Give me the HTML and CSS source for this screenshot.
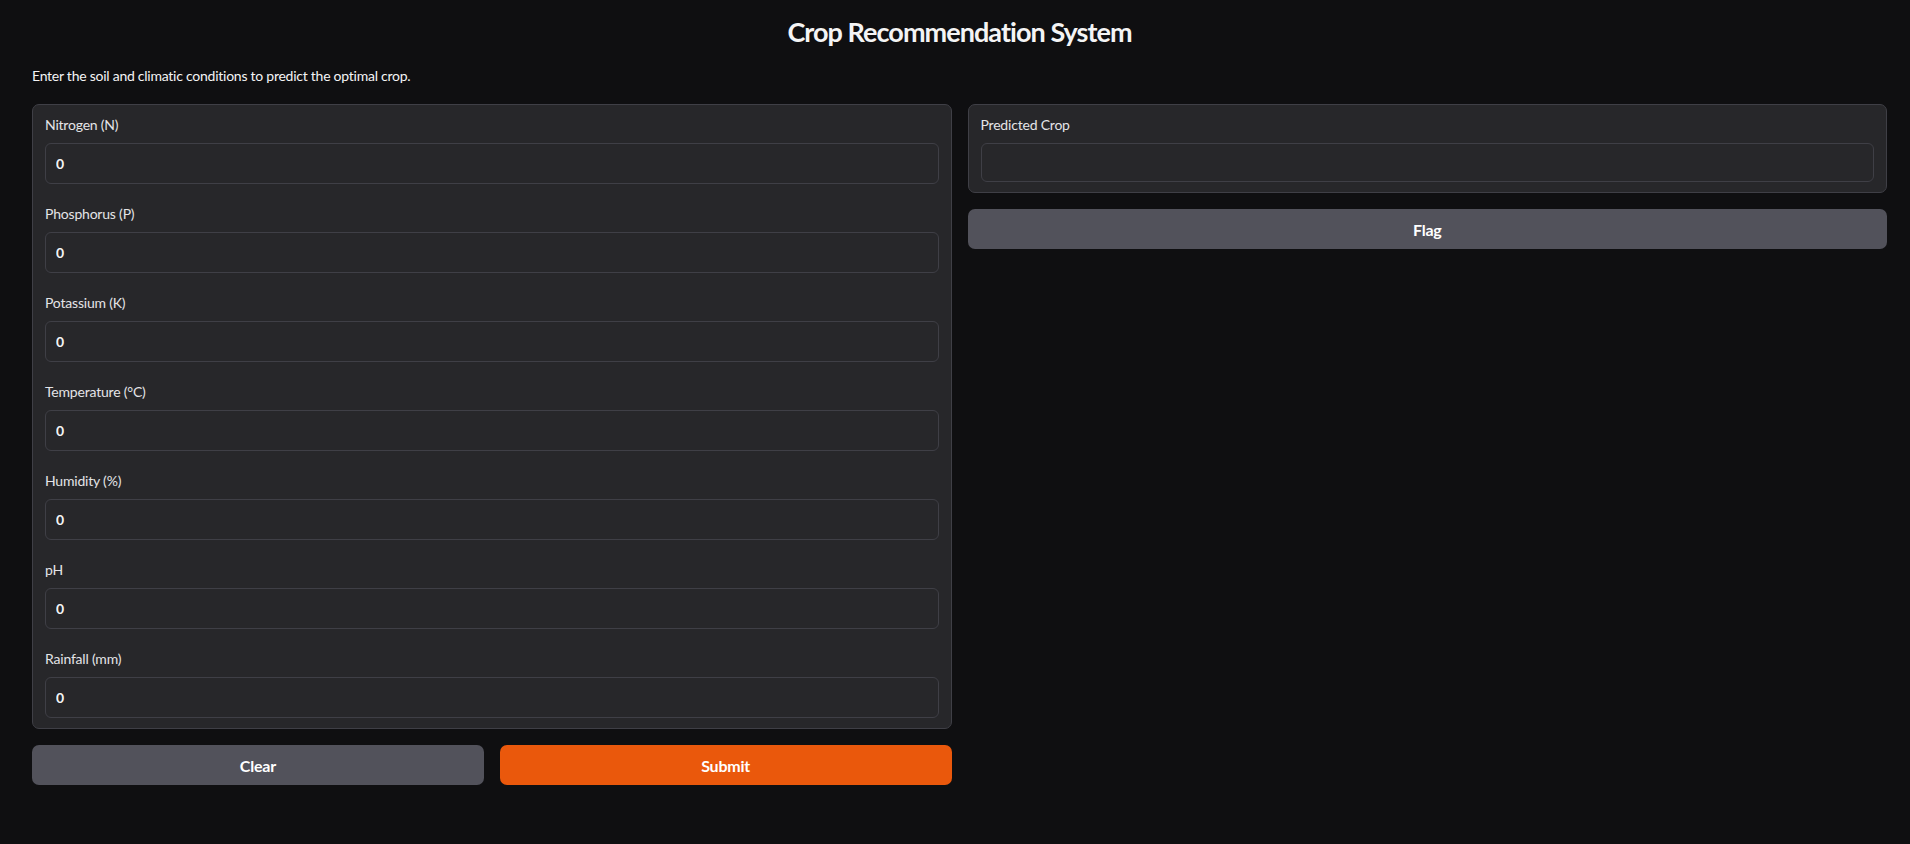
FILE: index.html
```html
<!DOCTYPE html>
<html lang="en">
<head>
<meta charset="utf-8">
<title>Crop Recommendation System</title>
<link rel="stylesheet" href="styles.css">
</head>
<body>
<div class="app">
  <h1 class="title">Crop Recommendation System</h1>
  <p class="desc">Enter the soil and climatic conditions to predict the optimal crop.</p>
  <div class="row">
    <div class="col">
      <div class="card">
        <label class="field"><span class="label">Nitrogen (N)</span><input class="num" type="text" value="0"></label>
        <label class="field"><span class="label">Phosphorus (P)</span><input class="num" type="text" value="0"></label>
        <label class="field"><span class="label">Potassium (K)</span><input class="num" type="text" value="0"></label>
        <label class="field"><span class="label">Temperature (°C)</span><input class="num" type="text" value="0"></label>
        <label class="field"><span class="label">Humidity (%)</span><input class="num" type="text" value="0"></label>
        <label class="field"><span class="label">pH</span><input class="num" type="text" value="0"></label>
        <label class="field"><span class="label">Rainfall (mm)</span><input class="num" type="text" value="0"></label>
      </div>
      <div class="btns">
        <button class="btn secondary">Clear</button>
        <button class="btn primary">Submit</button>
      </div>
    </div>
    <div class="col">
      <div class="card">
        <label class="field"><span class="label">Predicted Crop</span><textarea class="out" rows="1"></textarea></label>
      </div>
      <div class="btns">
        <button class="btn secondary">Flag</button>
      </div>
    </div>
  </div>
</div>
</body>
</html>
```

FILE: styles.css
```css
html, body {
  margin: 0;
  background: #0f0f11;
  color: #f4f4f5;
  font-family: Lato, "Noto Sans", sans-serif;
}

.app {
  padding: 15px 23px 0 32px;
}

.title {
  margin: 0;
  font-size: 27px;
  line-height: 34px;
  font-weight: 700;
  letter-spacing: -0.95px;
  text-align: center;
  color: #f4f4f5;
}

.desc {
  margin: 17px 0 18px 0;
  font-size: 14px;
  line-height: 20px;
  letter-spacing: -0.25px;
  color: #f4f4f5;
}

.row {
  display: flex;
  gap: 16px;
  align-items: flex-start;
}

.col {
  flex: 1 1 0;
  min-width: 0;
  display: flex;
  flex-direction: column;
  gap: 16px;
}

.card {
  background: #27272a;
  border: 1px solid #3f3f46;
  border-radius: 7px;
  display: flex;
  flex-direction: column;
}

.field {
  display: flex;
  flex-direction: column;
  gap: 8px;
  padding: 10px 12px;
}

.label {
  font-size: 14px;
  line-height: 20px;
  letter-spacing: -0.2px;
  color: #e4e4e7;
}

.num, .out {
  box-sizing: border-box;
  width: 100%;
  height: 41px;
  margin: 0;
  padding: 0 10px;
  background: #27272a;
  border: 1px solid #3f3f46;
  border-radius: 6px;
  color: #f4f4f5;
  font-family: Lato, "Noto Sans", sans-serif;
  font-size: 14px;
  font-weight: 700;
  outline: none;
}

.out {
  height: 39px;
  resize: none;
  display: block;
}

.btns {
  display: flex;
  gap: 16px;
}

.btn {
  flex: 1 1 0;
  height: 40px;
  border: none;
  border-radius: 7px;
  color: #ffffff;
  font-family: Lato, "Noto Sans", sans-serif;
  font-size: 16px;
  font-weight: 700;
  letter-spacing: -0.2px;
  cursor: pointer;
}

.secondary {
  background: #52525b;
}

.primary {
  background: #ea580c;
}
```
